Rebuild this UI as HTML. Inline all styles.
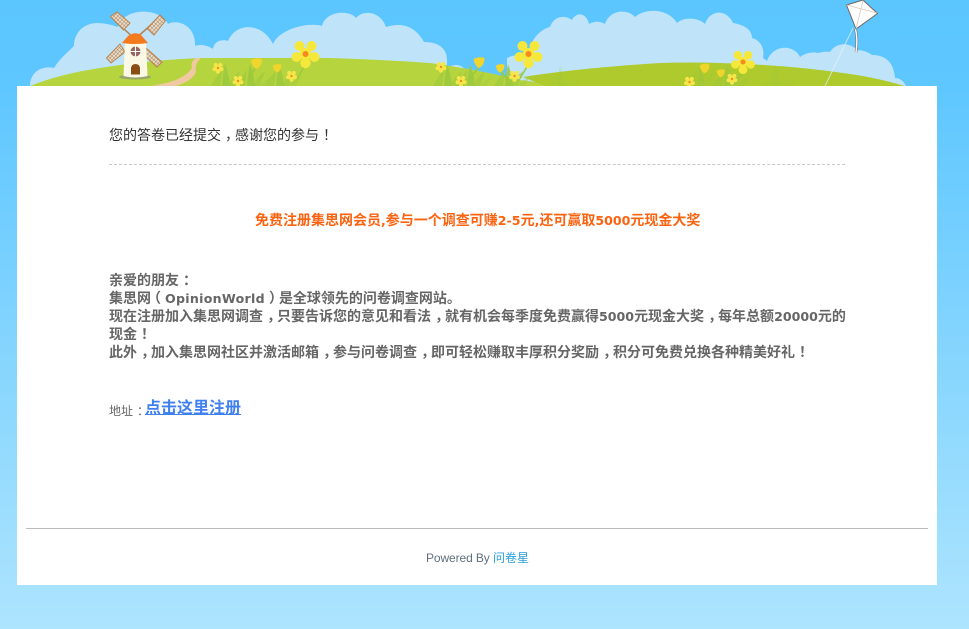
<!DOCTYPE html>
<html lang="zh-CN"><head><meta charset="utf-8"><title>问卷星</title>
<style>
html,body{margin:0;padding:0}
body{width:969px;height:629px;overflow:hidden;position:relative;background:linear-gradient(#5bc5fe 0,#5fc7ff 90px,#ade4fe 629px);font-family:"Liberation Sans","Noto Sans CJK SC",sans-serif;}
svg{position:absolute;left:0;top:0;filter:blur(.35px)}
#card{position:absolute;left:17px;top:86px;width:920px;height:499px;background:#fff}
.t{position:absolute;white-space:nowrap;font-size:14px;line-height:18px}
.en{font-family:"DejaVu Sans",sans-serif;font-size:12.6px;line-height:1}
.p{position:relative;left:4px}
.o{position:relative;left:-4px}
</style></head><body>
<svg width="969" height="90" viewBox="0 0 969 90">
<defs>
<g id="big"><g fill="#f6e83a"><circle cx="-6" cy="-8" r="5"/><circle cx="6" cy="-8" r="5"/><circle cx="-9" cy="3" r="5"/><circle cx="9" cy="3" r="5"/><circle cx="0" cy="9" r="5.200"/><circle r="6"/></g><circle r="3" fill="#f58a1f"/></g>
<g id="sm"><g fill="#f6e64a"><circle cx="-2.300" cy="-3" r="2.100"/><circle cx="2.300" cy="-3" r="2.100"/><circle cx="-3.400" cy="1.200" r="2.100"/><circle cx="3.400" cy="1.200" r="2.100"/><circle cx="0" cy="3.600" r="2.100"/><circle r="2.600"/></g><circle r="1.200" fill="#f58a1f"/></g>
<path id="tulip" d="M-6 -3 Q0 -6 5 -4 Q5 4 -1 6 Q-5 3 -6 -3Z" fill="#f0d52c"/>
<g id="grass" fill="#9cc83e"><path d="M-14 10 Q-10 2 -3 -6 Q-4 2 -5 10Z" opacity=".6"/><path d="M-3 10 Q-2 -4 0 -12 Q4 -2 5 10Z" opacity=".85"/><path d="M3 10 Q8 0 15 -5 Q12 3 10 10Z" opacity=".6"/><path d="M10 10 Q14 4 22 1 Q18 6 17 10Z" opacity=".4"/></g>
<pattern id="lat" width="2.800" height="2.800" patternUnits="userSpaceOnUse" patternTransform="rotate(42)"><rect width="2.800" height="2.800" fill="#e6dccb"/><path d="M0 0H2.800M0 0V2.800" stroke="#b0835a" stroke-width="1"/></pattern>
</defs>
<g fill="#bfe4f9">
<path d="M30 86C30 72 42 65 54 68C60 58 68 52 74 46C74 34 82 24 96 23C105 23 112 25 118 27C124 7 160 7 168 24C176 19 196 24 195 46C200 44 207 45 213 49C214 41 222 39 228 41C236 22 262 22 273 44C280 28 310 22 322 26C326 10 350 10 356 18C362 10 380 10 386 27C402 22 415 26 424 42C438 42 447 48 447 60L447 86Z"/>
<ellipse cx="456" cy="70" rx="8" ry="5"/>
<path d="M507 86L507 58Q515 54 528 55C530 42 538 30 550 27C554 15 566 15 572 20C576 12 586 12 589 24C594 21 600 21 605 24C610 9 628 9 635 17C645 8 668 8 677 23C683 17 698 17 705 24C710 9 727 9 733 23C745 25 752 30 752 38C760 40 765 48 763 58L767 61C773 44 794 44 800 57Q808 51 818 53Q825 51 830 52C836 42 850 42 857 50Q865 50 872 55Q893 55 895 78Q902 78 906 86Z"/>
</g>
<path d="M30 86Q60 74 100 68Q150 60 200 58L330 58Q390 60 430 63Q480 70 520 80L600 90L30 90Z" fill="#b6d43e"/>
<path d="M523 77Q580 68 660 63Q690 62 720 63Q790 65 850 74Q885 79 917 90L555 90Z" fill="#aeca2c"/>
<path d="M196 58Q190 62 192 68Q186 77 170 82Q158 85 146 87L172 87Q192 82 196 72Q194 64 201 58Z" fill="#f0c9a2"/>
<!-- windmill -->
<ellipse cx="135" cy="77" rx="16" ry="2.500" fill="#9aa56b"/>
<g stroke="#b9824f" stroke-width="1.500"><path d="M135 39L114 20M135 39L160 17M135 44L110 62M135 44L160 64"/></g>
<g stroke="#b9824f" stroke-width="1" fill="url(#lat)">
<path d="M110.500 16.500L117 12L130 23L123.500 30Z"/>
<path d="M147 28.500L160 15L165.500 20.500L154 35Z"/>
<path d="M106.500 58L120 44L125 52L111 63Z"/>
<path d="M146 48L162 62L157 67L144 55Z"/>
</g>
<path d="M125 42L146 42L147.500 76Q136 79 123.500 76Z" fill="#fbf9e6"/>
<path d="M122 43L128 36Q135 31 141 35L148 43Q135 45 122 43Z" fill="#f47a1d"/>
<circle cx="135.500" cy="51.500" r="5" fill="#96655f"/>
<path d="M135.500 46.500V56.500M130.500 51.500H140.500" stroke="#fff" stroke-width="1.100"/>
<path d="M131 74.500V69Q131 64 135.500 64Q140 64 140 69V74.500Z" fill="#8a4d14"/>
<!-- grass -->
<g><use href="#grass" x="225" y="76"/><use href="#grass" x="250" y="76"/><use href="#grass" x="279" y="76"/><use href="#grass" x="447" y="76"/><use href="#grass" x="470" y="76"/><use href="#grass" x="508" y="76"/><use href="#grass" x="700" y="76" opacity=".6"/><use href="#grass" x="727" y="76" opacity=".7"/><use href="#grass" x="560" y="78" opacity=".3"/><use href="#grass" x="775" y="78" opacity=".4"/></g>
<path d="M305 65L297 79M528 65L519 80M743 72L735 84M257 66L248 79M480 66L470 78M500 71L508 80" stroke="#9cc83e" stroke-width="1.500" fill="none"/>
<use href="#big" x="305.500" y="54"/><use href="#big" x="528.500" y="54"/>
<g transform="translate(743 62) scale(.85)"><use href="#big"/></g>
<use href="#sm" x="218" y="68"/><use href="#sm" x="238" y="81"/><use href="#sm" x="291.500" y="76"/><use href="#sm" x="441" y="67"/><use href="#sm" x="461" y="81"/><use href="#sm" x="514.500" y="76"/><use href="#sm" x="689.500" y="82"/><use href="#sm" x="732" y="79"/>
<use href="#tulip" x="257" y="63"/><use href="#tulip" x="479.500" y="62"/><g transform="translate(277.500 68) scale(.8)"><use href="#tulip"/></g><g transform="translate(500.500 68) scale(.8)"><use href="#tulip"/></g><g transform="translate(705 68) scale(.9)"><use href="#tulip"/></g><g transform="translate(721 73) scale(.75)"><use href="#tulip"/></g>
<!-- kite -->
<path d="M853 28L825 86" stroke="#e4f3f2" stroke-width="1" opacity=".7"/>
<path d="M855.500 29Q858 40 856 52" stroke="#7a6a66" stroke-width="2.600" fill="none"/>
<path d="M855.500 29Q858 40 856 52" stroke="#fff" stroke-width="1.400" fill="none"/>
<path d="M846.500 5L863 0L877.500 13.500L856 29Z" fill="#fff" stroke="#75655f" stroke-width="1"/>
<path d="M846.500 5L877 13M863 .5L856 29" stroke="#d9c9c4" stroke-width=".8"/>
</svg>
<div id="card"></div>
<div class="t" style="left:109px;top:126px;color:#333">您的答卷已经提交<span class="p">，</span>感谢您的参与<span class="p">！</span></div>
<div style="position:absolute;left:109px;top:164px;width:736px;border-top:1px dashed #c8c8c8"></div>
<div class="t" style="left:255px;top:211px;font-weight:bold;color:#fb6310">免费注册集思网会员<span class="en">,</span>参与一个调查可赚<span class="en">2-5</span>元<span class="en">,</span>还可赢取<span class="en">5000</span>元现金大奖</div>
<div class="t" style="left:109px;top:271px;font-weight:bold;color:#666">亲爱的朋友<span class="p">：</span><br>集思网<span class="o">（</span><span class="en" style="letter-spacing:.28px">OpinionWorld</span><span class="p">）</span>是全球领先的问卷调查网站。<br>现在注册加入集思网调查<span class="p">，</span>只要告诉您的意见和看法<span class="p">，</span>就有机会每季度免费赢得<span class="en">5000</span>元现金大奖<span class="p">，</span>每年总额<span class="en">20000</span>元的<br>现金<span class="p">！</span><br>此外<span class="p">，</span>加入集思网社区并激活邮箱<span class="p">，</span>参与问卷调查<span class="p">，</span>即可轻松赚取丰厚积分奖励<span class="p">，</span>积分可免费兑换各种精美好礼<span class="p">！</span></div>
<div class="t" style="left:109px;top:402px;font-size:12px;color:#666">地址<span class="p">：</span></div>
<div class="t" style="left:145px;top:399px;font-size:16px;line-height:20px;font-weight:bold;color:#3f80ee;text-decoration:underline">点击这里注册</div>
<div style="position:absolute;left:26px;top:528px;width:902px;border-top:1px solid #bbb"></div>
<div class="t" style="left:426px;top:549px;font-size:12px;color:#607080;letter-spacing:-.1px">Powered By <span style="color:#2a9fe0;letter-spacing:0">问卷星</span></div>
</body></html>
